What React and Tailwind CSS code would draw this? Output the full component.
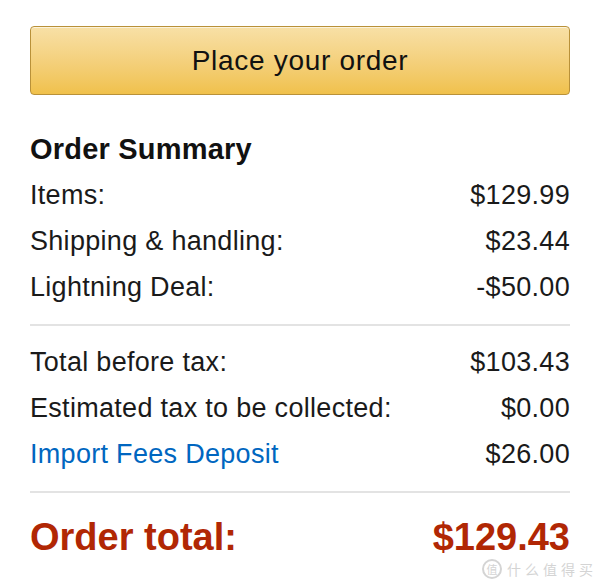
export default function App() {
  const top = [
    ["Items:", "$129.99"],
    ["Shipping & handling:", "$23.44"],
    ["Lightning Deal:", "-$50.00"],
  ];
  const bottom = [
    ["Total before tax:", "$103.43"],
    ["Estimated tax to be collected:", "$0.00"],
  ];

  return (
    <div className="relative w-[600px] h-[579px] bg-white px-[30px] pt-[26px] text-[#1a1a1a] font-['Liberation_Sans',Arial,sans-serif]">
      {/* Place order button */}
      <button className="w-full h-[69px] rounded-[4px] border border-[#b99139] bg-gradient-to-b from-[#f8e0a6] to-[#f0c14b] shadow-[inset_0_1px_0_rgba(255,255,255,0.6)] text-[28px] tracking-[0.7px] text-[#111]">
        Place your order
      </button>

      <h2 className="mt-[31px] text-[29px] font-bold leading-[46px] tracking-[0.2px] text-[#111]">Order Summary</h2>

      {top.map(([label, value]) => (
        <div key={label} className="flex justify-between text-[27px] leading-[46px] tracking-[0.3px]">
          <span>{label}</span>
          <span>{value}</span>
        </div>
      ))}

      <div className="mt-[14px] mb-[13px] h-[2px] bg-[#e3e3e3]" />

      {bottom.map(([label, value]) => (
        <div key={label} className="flex justify-between text-[27px] leading-[46px] tracking-[0.3px]">
          <span>{label}</span>
          <span>{value}</span>
        </div>
      ))}
      <div className="flex justify-between text-[27px] leading-[46px] tracking-[0.3px]">
        <span className="text-[#0066c0]">Import Fees Deposit</span>
        <span>$26.00</span>
      </div>

      <div className="mt-[14px] mb-[26px] h-[2px] bg-[#e3e3e3]" />

      <div className="flex justify-between text-[38px] font-bold leading-[36px] text-[#b12704]">
        <span>Order total:</span>
        <span>$129.43</span>
      </div>

      {/* watermark */}
      <div className="absolute right-[3px] bottom-0 h-[20px] flex items-center gap-[5px] text-[#d4d4d4] text-[14px] leading-[20px] tracking-[4px] font-['Noto_Sans_CJK_SC',sans-serif]">
        <span className="w-[20px] h-[20px] rounded-full border-2 border-[#d4d4d4] flex items-center justify-center text-[11px] leading-[11px] tracking-normal">值</span>
        <span>什么值得买</span>
      </div>
    </div>
  );
}
